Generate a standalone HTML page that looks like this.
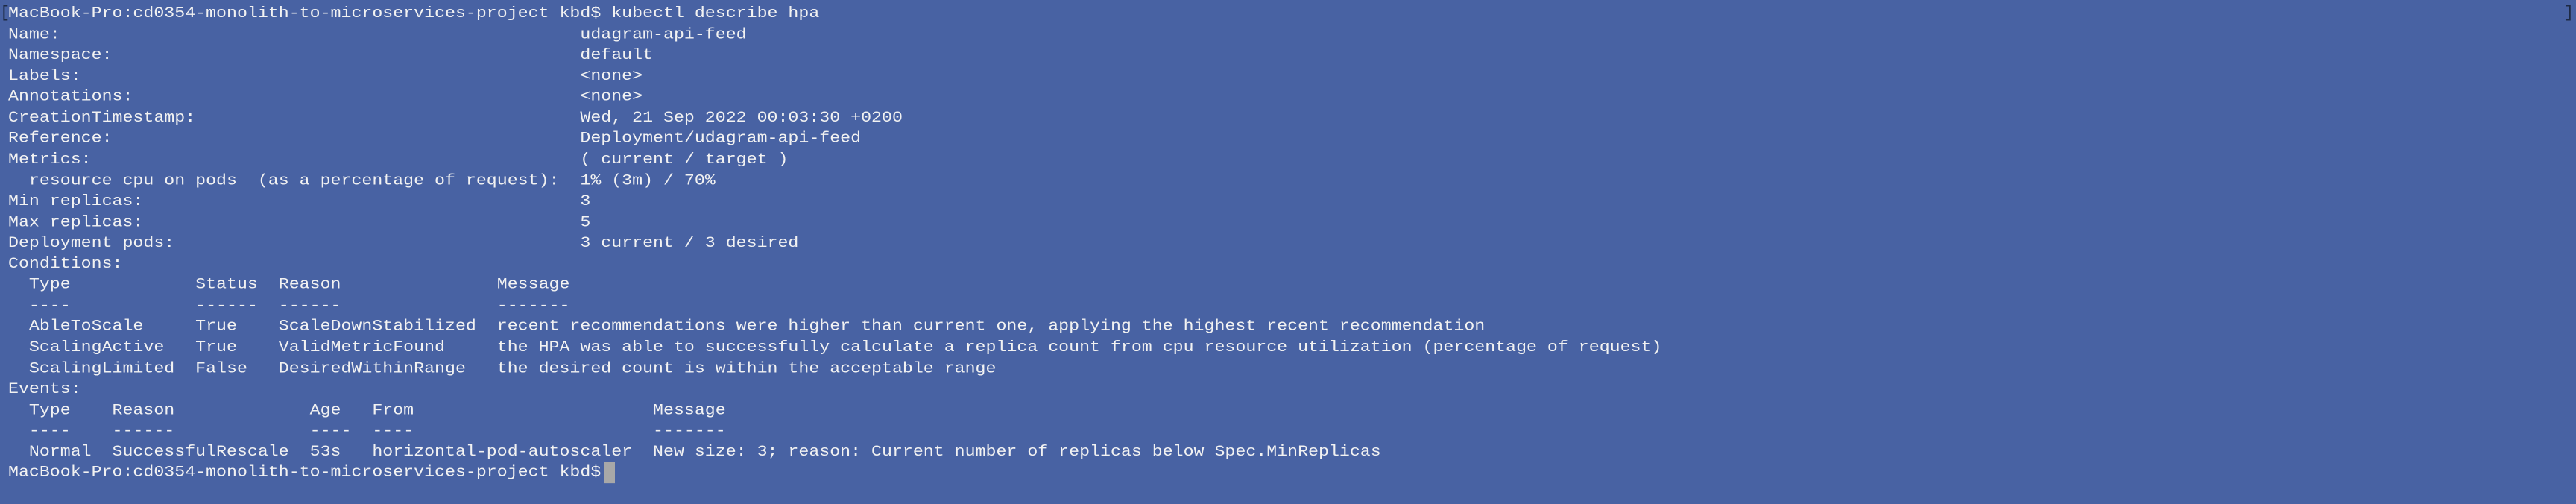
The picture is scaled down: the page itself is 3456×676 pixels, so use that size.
<!DOCTYPE html>
<html><head><style>
html,body{margin:0;padding:0;width:3456px;height:676px;background:#4862a3;overflow:hidden}
pre{position:absolute;left:11px;top:4px;margin:0;font-family:"Liberation Mono",monospace;font-size:23.25px;line-height:32.56px;letter-spacing:0;color:#f2f2f2;transform:scaleY(0.86);transform-origin:0 0}
.b{position:absolute;font-family:"Liberation Mono",monospace;font-size:22px;color:#1e2a44;line-height:28px}
.cur{display:inline-block;width:15px;height:32.56px;background:#a8a8a8;vertical-align:top;margin-left:4px}
</style></head><body>
<div class="b" style="left:0;top:4px">[</div>
<div class="b" style="left:3440px;top:4px">]</div>
<pre>MacBook-Pro:cd0354-monolith-to-microservices-project kbd$ kubectl describe hpa
Name:                                                  udagram-api-feed
Namespace:                                             default
Labels:                                                &lt;none&gt;
Annotations:                                           &lt;none&gt;
CreationTimestamp:                                     Wed, 21 Sep 2022 00:03:30 +0200
Reference:                                             Deployment/udagram-api-feed
Metrics:                                               ( current / target )
  resource cpu on pods  (as a percentage of request):  1% (3m) / 70%
Min replicas:                                          3
Max replicas:                                          5
Deployment pods:                                       3 current / 3 desired
Conditions:
  Type            Status  Reason               Message
  ----            ------  ------               -------
  AbleToScale     True    ScaleDownStabilized  recent recommendations were higher than current one, applying the highest recent recommendation
  ScalingActive   True    ValidMetricFound     the HPA was able to successfully calculate a replica count from cpu resource utilization (percentage of request)
  ScalingLimited  False   DesiredWithinRange   the desired count is within the acceptable range
Events:
  Type    Reason             Age   From                       Message
  ----    ------             ----  ----                       -------
  Normal  SuccessfulRescale  53s   horizontal-pod-autoscaler  New size: 3; reason: Current number of replicas below Spec.MinReplicas
MacBook-Pro:cd0354-monolith-to-microservices-project kbd$<span class="cur"></span></pre>
</body></html>
